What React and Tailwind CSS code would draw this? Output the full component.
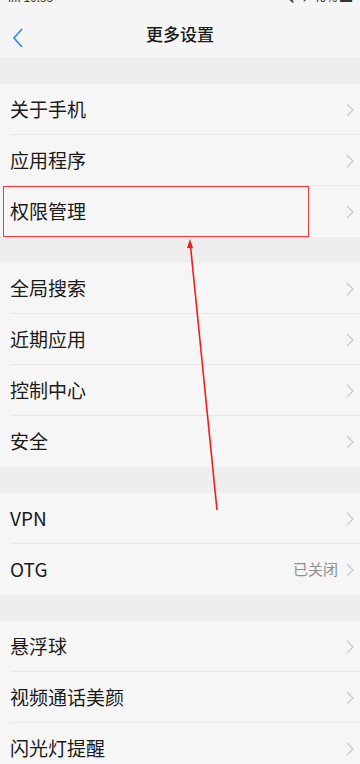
import React from "react";

const groups = [
  ["关于手机", "应用程序", "权限管理"],
  ["全局搜索", "近期应用", "控制中心", "安全"],
  ["VPN", { label: "OTG", value: "已关闭" }],
  ["悬浮球", "视频通话美颜", "闪光灯提醒"],
];

const Chevron = () => (
  <svg width="8" height="14" viewBox="0 0 8 14" className="shrink-0">
    <path d="M1 1l6 6-6 6" fill="none" stroke="#c9c9c9" strokeWidth="1.3" />
  </svg>
);

const Row = ({ item, last, highlight }) => {
  const label = typeof item === "string" ? item : item.label;
  const value = typeof item === "string" ? null : item.value;
  return (
    <div className="relative h-[51px] flex items-center pl-[10px] pr-[6px]">
      <span className="flex-1 text-[19px] text-[#1a1a1a]">{label}</span>
      {value && <span className="text-[15px] text-[#8e8e8e] mr-[8px]">{value}</span>}
      <Chevron />
      {!last && <div className="absolute bottom-0 left-[10px] right-0 h-px bg-[#e6e6e6]" />}
      {highlight && (
        <div className="absolute left-[3px] top-0 w-[306px] h-[51px] border border-[#f03a3a]" />
      )}
    </div>
  );
};

export default function App() {
  return (
    <div
      className="relative w-[360px] h-[764px] overflow-hidden bg-[#eeeeee]"
      style={{ fontFamily: '"Noto Sans CJK SC", "Noto Sans", sans-serif' }}
    >
      <div className="bg-[#f5f5f5]">
        <div className="h-[3px] overflow-hidden flex justify-between px-[8px] items-end">
          <span className="text-[12px] leading-[12px] text-[#333]">ıııl 10:55</span>
          <span className="text-[12px] leading-[12px] text-[#333]">令 ✈ 40% ▬</span>
        </div>
        <div className="h-[55px] flex items-center relative">
          <svg width="14" height="22" viewBox="0 0 14 22" className="absolute left-[11px] top-[24px]">
            <path d="M11 2L3 11l8 9" fill="none" stroke="#3b8fe8" strokeWidth="1.8" />
          </svg>
          <div className="flex-1 text-center text-[17px] font-medium text-[#1a1a1a] pt-[6px]">更多设置</div>
        </div>
      </div>
      {groups.map((g, gi) => (
        <div key={gi} className="pt-[26px]">
          <div className="bg-[#f6f6f6]">
            {g.map((item, i) => (
              <Row key={i} item={item} last={i === g.length - 1} highlight={gi === 0 && i === 2} />
            ))}
          </div>
        </div>
      ))}
      <svg className="absolute left-0 top-0 pointer-events-none" width="360" height="764">
        <line x1="217" y1="510" x2="190.5" y2="246" stroke="#f21d1d" strokeWidth="1.6" />
        <path d="M190 239l-3 9h6z" fill="#f21d1d" />
      </svg>
    </div>
  );
}
